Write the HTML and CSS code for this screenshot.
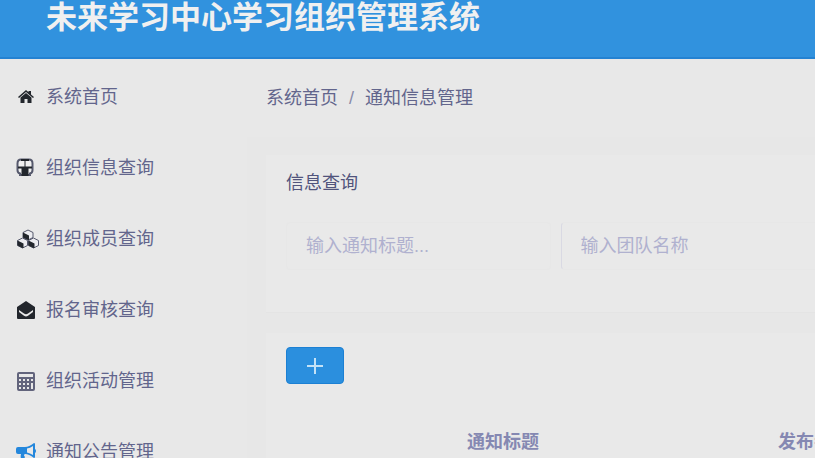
FILE: index.html
```html
<!DOCTYPE html>
<html lang="zh-CN">
<head>
    <meta charset="UTF-8">
    <meta name="viewport" content="width=device-width, initial-scale=1.0">
    <title>未来学习中心学习组织管理系统</title>
    <link rel="stylesheet" href="styles.css">
</head>
<body>

<header class="header">
    <h1>未来学习中心学习组织管理系统</h1>
</header>

<div class="layout">
    <nav class="sidebar">
        <a href="#" class="home">
            <svg viewBox="0 0 20 20"><path d="M2 10 10 3l2.500 2.200V4H15v3.500l3 2.500-1 1-7-6-7 6z"/><path d="M4.500 10.500 10 6l5.500 4.500V16h-4v-4h-3v4h-4z"/></svg>
            <span>系统首页</span>
        </a>
        <a href="#">
            <svg viewBox="0 0 20 20">
                <path class="shell" d="M5 1.500h8q3.500 0 3.500 4V12q0 3-2.500 3.500V17H4v-1.500Q1.500 15 1.500 12V5.500q0-4 3.500-4z"/>
                <path d="M5 1h8v2H5zM8.500 3h1v6h-1zM2 8.500h14v2H2zM5.500 10.500h7V18h-7z"/>
            </svg>
            <span>组织信息查询</span>
        </a>
        <a href="#">
            <svg class="wide" viewBox="0 0 24 20">
                <path class="cube" d="m12 1 5 2.500v5L12 11 7 8.500v-5zM6.500 9l5 2.500v5l-5 2.500-5-2.500v-5zM17.500 9l5 2.500v5l-5 2.500-5-2.500v-5z"/>
                <path d="m7 3.500 6 3V11h-1L7 8.500zM1.500 11.500l6 3V19h-1l-5-2.500zM12.500 11.500l6 3V19h-1l-5-2.500z"/>
            </svg>
            <span>组织成员查询</span>
        </a>
        <a href="#">
            <svg viewBox="0 0 20 20"><path fill-rule="evenodd" d="M10 1 19 7v11q0 1-1 1H2q-1 0-1-1V7zM3 10v2l5 3.700q2 1.500 4 0l5-3.700v-2l-5 3.500q-2 1.300-4 0z"/></svg>
            <span>报名审核查询</span>
        </a>
        <a href="#">
            <svg class="calc" viewBox="0 0 20 20">
                <rect x="2" y="2" width="16" height="17" rx="1"/>
                <path d="M2 7h16M2 11h16M2 15h12M6 7v12M10 7v12M14 7v12"/>
            </svg>
            <span>组织活动管理</span>
        </a>
        <a href="#" class="active">
            <svg viewBox="0 0 20 20"><path fill-rule="evenodd" d="M18 1q1 0 1 1v5q1 .5 1 2t-1 2v4q0 1-1 1-5-4-9-4-2 1 0 3-1 1 1 3-1 1-4 1-2-3-1-7H2q-2 0-2-2V7q0-2 2-2h7q4 0 9-4zM17 4q-3 2-6 2.500v4q3 .5 6 2.500z"/></svg>
            <span>通知公告管理</span>
        </a>
    </nav>

    <main class="main">
        <div class="breadcrumb">
            <a href="#">系统首页</a>
            <span class="sep">/</span>
            <span>通知信息管理</span>
        </div>

        <div class="content">
            <form class="card search">
                <h2>信息查询</h2>
                <div class="fields">
                    <input type="text" placeholder="输入通知标题..." aria-label="通知标题">
                    <input type="text" class="divided" placeholder="输入团队名称" aria-label="团队名称">
                </div>
            </form>

            <section class="card list">
                <button type="button" class="add" aria-label="新增">
                    <svg viewBox="0 0 16 16"><path d="M8 0v16M0 8h16"/></svg>
                </button>
                <table>
                    <thead>
                        <tr>
                            <th class="check"></th>
                            <th>通知标题</th>
                            <th>发布者</th>
                        </tr>
                    </thead>
                </table>
            </section>
        </div>
    </main>
</div>

</body>
</html>
```
FILE: styles.css
```css
* {
    box-sizing: border-box;
}

body {
    margin: 0;
    height: 100vh;
    overflow: hidden;
    background-color: #e8e8e8;
    color: #62658c;
    font-family: "Liberation Sans", "Noto Sans CJK SC", sans-serif;
    font-size: 18px;
    line-height: 24px;
}

a {
    color: inherit;
    text-decoration: none;
}

.header {
    padding: 0 46px 21px;
    background-color: #3192de;
    border-bottom: 2px solid #2482d2;
}

.header h1 {
    margin: 0;
    color: #f0f0f0;
    font-size: 31px;
    line-height: 36px;
    white-space: nowrap;
}

.layout {
    display: flex;
}

/* Left menu */
.sidebar {
    flex: 0 0 247px;
    display: flex;
    flex-direction: column;
    gap: 47px;
    padding: 26px 16px;
}

.sidebar a {
    display: flex;
    align-items: center;
    gap: 10px;
    height: 24px;
}

.sidebar svg {
    width: 20px;
    height: 20px;
    fill: #22262c;
}

.sidebar .wide {
    width: 24px;
    margin-right: -4px;
}

.sidebar .shell {
    fill: #f0f0f0;
    stroke: #55586c;
    stroke-width: 2;
}

.sidebar .cube {
    fill: #ececf0;
    stroke: #55586c;
    stroke-width: 1;
}

.sidebar .calc {
    fill: none;
    stroke: #62647c;
    stroke-width: 2;
}

.sidebar .active svg {
    fill: #2487dc;
}

/* Right side */
.main {
    flex: 1;
    min-width: 0;
}

.breadcrumb {
    display: flex;
    gap: 11px;
    padding: 27px 19px;
    white-space: nowrap;
}

.breadcrumb .sep {
    color: #8a8ca8;
}

.content {
    display: flex;
    flex-direction: column;
    gap: 20px;
    padding: 18px 0 20px 19px;
    background-color: #e7e7e7;
}

.card {
    overflow: hidden;
    background-color: #e9e9e9;
}

.search {
    padding: 16px 0 42px 20px;
    border-bottom: 1px solid #e4e4e4;
}

.search h2 {
    margin: 0 0 27px;
    color: #51547c;
    font-size: 18px;
    font-weight: normal;
    line-height: 24px;
}

.fields {
    display: flex;
    gap: 10px;
}

.fields input {
    flex: 0 0 50%;
    min-width: 0;
    height: 48px;
    padding: 0 19px;
    border: 1px solid #e7e7e7;
    border-radius: 4px;
    background-color: transparent;
    color: #62658c;
    font: inherit;
}

.fields .divided {
    border-left-color: #d9d9e3;
}

.fields input::placeholder {
    color: #b0b1cf;
    opacity: 1;
}

.list {
    padding: 14px 0 20px 20px;
}

.add {
    display: flex;
    align-items: center;
    justify-content: center;
    width: 58px;
    height: 37px;
    margin-bottom: 34px;
    padding: 0;
    border: 1px solid #1c80d3;
    border-radius: 4px;
    background-color: #2b8fde;
    cursor: pointer;
}

.add svg {
    width: 16px;
    height: 16px;
    stroke: #c4e2f6;
    stroke-width: 2;
}

table {
    width: 670px;
    table-layout: fixed;
    border-collapse: collapse;
}

th {
    padding: 12px 0;
    color: #8588b2;
    font-weight: bold;
    text-align: center;
}

th.check {
    width: 66px;
}
```
